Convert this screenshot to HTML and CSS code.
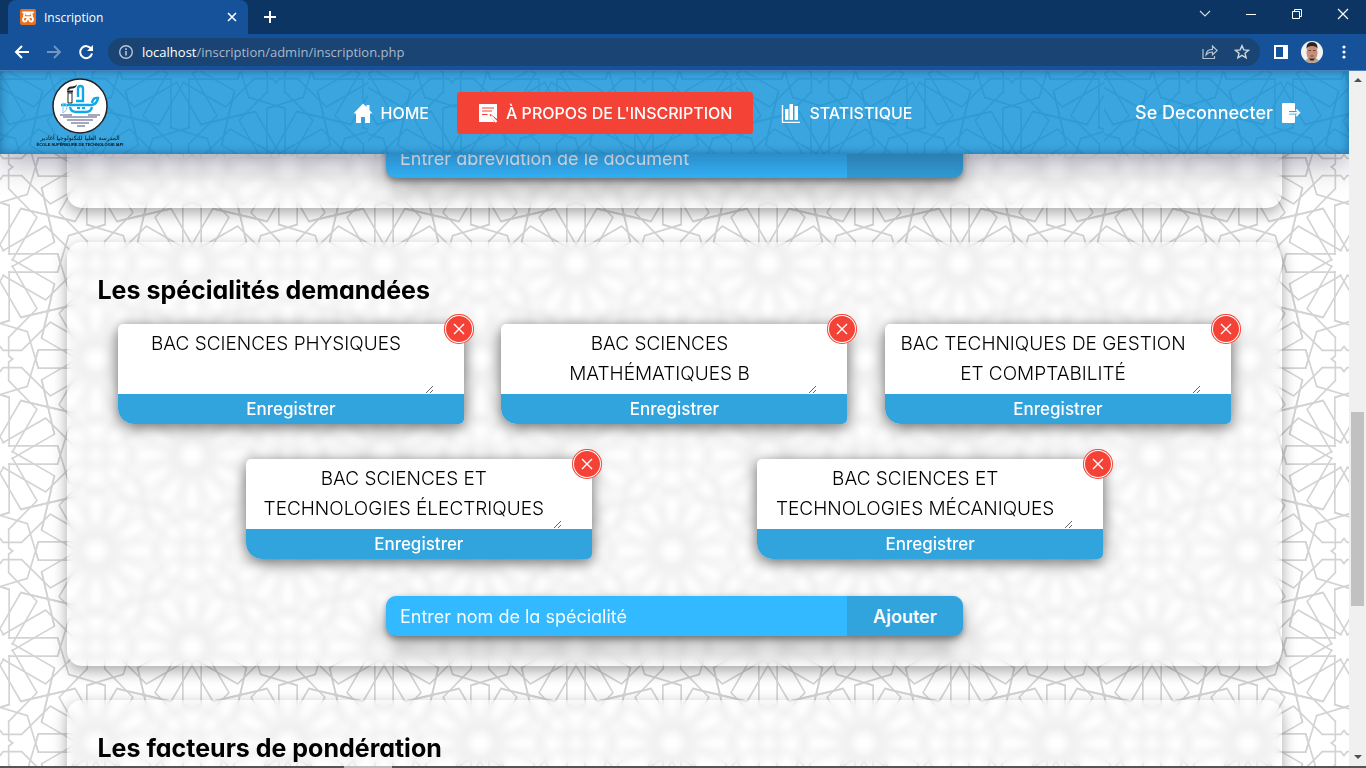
FILE: index.html
```html
<!DOCTYPE html>
<html lang="fr">
<head>
<meta charset="utf-8">
<title>Inscription</title>
<link rel="stylesheet" href="styles.css">
</head>
<body>
<div class="browser">
  <div class="tabbar">
    <div class="tab">
      <svg class="favicon" viewBox="0 0 16 16" width="16" height="16" aria-hidden="true"><rect width="16" height="16" rx="2" fill="#e8711f"/><g fill="none" stroke="#fff" stroke-width="1.800" stroke-linecap="round" stroke-linejoin="round"><path d="M3 3.500h10M4.500 5.200Q3 8 5 8.200M11.500 5.200Q13 8 11 8.200M5 8.200h6M5 8.200Q3 8.500 3 10.500t1.800 2 2-1.700L8 8.200l1.200 2.600q.3 1.700 2 1.700t1.800-2-2-2.300M6.500 5.300h3"/></g></svg>
      <span class="tab-title">Inscription</span>
      <button class="chrome-btn tab-close" aria-label="Fermer l'onglet"><svg viewBox="0 0 10 10" width="10" height="10"><path d="M1 1l8 8M9 1l-8 8" stroke="#fff" stroke-width="1.600"/></svg></button>
    </div>
    <button class="chrome-btn new-tab" aria-label="Nouvel onglet"><svg viewBox="0 0 12 12" width="12" height="12"><path d="M6 0v12M0 6h12" stroke="#fff" stroke-width="2"/></svg></button>
    <div class="window-buttons">
      <button class="chrome-btn" aria-label="Onglets"><svg viewBox="0 0 12 12" width="12" height="12"><path d="M1 3l5 5 5-5" fill="none" stroke="#cfd9e4" stroke-width="1.200"/></svg></button>
      <button class="chrome-btn" aria-label="Réduire"><svg viewBox="0 0 12 12" width="12" height="12"><path d="M1 6.500h10" stroke="#fff"/></svg></button>
      <button class="chrome-btn" aria-label="Restaurer"><svg viewBox="0 0 12 12" width="12" height="12"><path d="M1.500 3.500h7v7h-7zM3.500 3.500v-2h7v7h-2" fill="none" stroke="#fff"/></svg></button>
      <button class="chrome-btn" aria-label="Fermer"><svg viewBox="0 0 12 12" width="12" height="12"><path d="M1 1l10 10M11 1L1 11" stroke="#fff" stroke-width="1.200"/></svg></button>
    </div>
  </div>
  <div class="toolbar">
    <button class="chrome-btn" aria-label="Retour"><svg viewBox="0 0 16 16" width="16" height="16"><path d="M15 8H2M8 2L2 8l6 6" fill="none" stroke="#fff" stroke-width="2"/></svg></button>
    <button class="chrome-btn" aria-label="Avancer"><svg viewBox="0 0 16 16" width="16" height="16"><path d="M1 8h13M8 2l6 6-6 6" fill="none" stroke="#7396c1" stroke-width="1.800"/></svg></button>
    <button class="chrome-btn" aria-label="Actualiser"><svg viewBox="0 0 16 16" width="16" height="16"><path d="M13.300 5A6 6 0 1 0 14 9.500" fill="none" stroke="#fff" stroke-width="2"/><path d="M15 1v6H9z" fill="#fff"/></svg></button>
    <div class="omnibox">
      <svg viewBox="0 0 16 16" width="16" height="16" aria-hidden="true"><circle cx="8" cy="8" r="6.300" fill="none" stroke="#b9c6d5" stroke-width="1.400"/><path d="M8 7v4.500M8 4.300v1.700" stroke="#b9c6d5" stroke-width="1.600"/></svg>
      <div class="url"><span class="host">localhost</span>/inscription/admin/inscription.php</div>
      <button class="chrome-btn" aria-label="Partager"><svg viewBox="0 0 16 16" width="16" height="16"><path d="M1 5v9.500h11.500V12M4 11c.4-4 3-5.600 6.500-5.600V2l4.700 4.500-4.700 4.300V8C7.500 8 5.500 9 4 11z" fill="none" stroke="#b4c1d0" stroke-width="1.200"/></svg></button>
      <button class="chrome-btn" aria-label="Favori"><svg viewBox="0 0 16 16" width="16" height="16"><path d="M8 1.700l1.800 4.200 4.700.4-3.500 3 1.100 4.500L8 11.400l-4.100 2.400L5 9.300l-3.500-3 4.700-.4z" fill="none" stroke="#d0d8e2" stroke-width="1.400"/></svg></button>
    </div>
    <button class="chrome-btn" aria-label="Panneau latéral"><svg viewBox="0 0 14 14" width="14" height="14"><path d="M0 0h14v14H0zM2 2v10h7V2z" fill="#fff" fill-rule="evenodd"/></svg></button>
    <button class="chrome-btn profile" aria-label="Profil"><svg viewBox="0 0 22 22" width="22" height="22"><defs><clipPath id="face"><circle cx="11" cy="11" r="11"/></clipPath></defs><g clip-path="url(#face)"><rect width="22" height="22" fill="#f3f2f1"/><path d="M3 22q1-4 5-5h6q4 1 5 5z" fill="#b9a391"/><ellipse cx="11" cy="11.500" rx="5.500" ry="8.500" fill="#c58e78"/><path d="M5.500 8Q5 1 11 1t5.500 7q-1-3-5.500-3T5.500 8z" fill="#2b2322"/><path d="M8 17.500h6l-1.500 2h-3z" fill="#3a2925"/><path d="M7.500 9.500h2.500M12 9.500h2.500M9.500 15h3" stroke="#6b4336"/></g></svg></button>
    <button class="chrome-btn" aria-label="Menu"><svg viewBox="0 0 4 14" width="4" height="14"><g fill="#fff"><circle cx="2" cy="2" r="1.600"/><circle cx="2" cy="7" r="1.600"/><circle cx="2" cy="12" r="1.600"/></g></svg></button>
  </div>

  <div class="viewport">
    <div class="page">
      <svg class="backdrop" width="100%" height="100%" aria-hidden="true">
        <defs>
          <g id="petal">
            <path d="M26 27.500H173L181 0 173-27.500H26"/>
          </g>
          <g id="links">
            <path d="M163 63L125 225M63 163L225 125M110 138L26 223M138 110L223 26M173-27.500L206 82M173 27.500L206-82"/>
          </g>
          <g id="rosette">
            <use href="#petal"/><use href="#petal" transform="rotate(90)"/><use href="#petal" transform="rotate(180)"/><use href="#petal" transform="rotate(270)"/>
            <g id="slant"><path id="bar" d="M26 27.500H173M26-27.500H173" transform="rotate(30)"/><use href="#bar" transform="rotate(30)"/></g>
            <use href="#slant" transform="rotate(90)"/><use href="#slant" transform="rotate(180)"/><use href="#slant" transform="rotate(270)"/>
            <use href="#links"/><use href="#links" transform="rotate(90)"/><use href="#links" transform="rotate(180)"/><use href="#links" transform="rotate(270)"/>
          </g>
          <g id="cross">
            <path id="notch" d="M26-65V-9L38 0 26 9V65"/>
            <use href="#notch" transform="rotate(90)"/><use href="#notch" transform="rotate(180)"/><use href="#notch" transform="rotate(270)"/>
          </g>
          <g id="cell">
            <use href="#rosette"/><use href="#rosette" x="576"/><use href="#rosette" y="576"/><use href="#rosette" x="576" y="576"/><use href="#rosette" x="288" y="288"/>
            <use href="#cross" y="288"/><use href="#cross" x="576" y="288"/><use href="#cross" x="288"/><use href="#cross" x="288" y="576"/>
          </g>
          <pattern id="zellige" width="192" height="192" patternUnits="userSpaceOnUse">
            <use href="#cell" transform="scale(.33333)" fill="none" stroke="#d3d3d3" stroke-width="5" stroke-linecap="round"/>
          </pattern>
          <pattern id="zellige-header" width="192" height="192" patternUnits="userSpaceOnUse" patternTransform="translate(-12 -1)">
            <use href="#cell" transform="scale(.33333)" fill="none" stroke="#2f9ad4" stroke-width="5" stroke-linecap="round"/>
          </pattern>
          <pattern id="header-tile" width="368" height="192" patternUnits="userSpaceOnUse"><rect width="368" height="192" fill="url(#zellige-header)"/></pattern>
        </defs>
        <rect width="100%" height="100%" fill="url(#zellige)"/>
      </svg>

      <header class="header">
        <svg class="backdrop" width="100%" height="100%" aria-hidden="true"><rect width="100%" height="100%" fill="url(#header-tile)"/></svg>
        <a class="logo" href="#">
          <svg viewBox="0 0 56 56" width="56" height="56" aria-hidden="true">
            <circle cx="28" cy="28" r="27" fill="#fff" stroke="#222" stroke-width="1.500"/>
            <path d="M16 15h4v10h-4z" fill="#fff" stroke="#222"/><path d="M15 13.500h6" stroke="#222" stroke-width="2"/><path d="M15 12q1-4 5-3.500 3 0 5-2-1 4-5 4-3 0-3 2" fill="#222"/>
            <g fill="none" stroke="#10a9e6" stroke-width="2.400"><path d="M24 23h7V11q0-3-2.500-3T26 11v8"/><path d="M9 27h31q5-1 6-7-5-1-6 5"/><path d="M18 29q1 5 6 5h10q5 0 6-5"/></g>
            <path d="M11 25q4 0 4 4t-4 6z" fill="none" stroke="#7ccbee"/><path d="M25 30h3M30 30h3" stroke="#10a9e6" stroke-width="2"/>
            <g stroke="#a3a8bf" stroke-width="2"><path d="M8 37h12M36 37h12M11 39h34M15 42h26M19 45h18M25 48h8"/></g>
          </svg>
          <span class="logo-ar" lang="ar">المدرسة العليا للتكنولوجيا أغادير</span>
          <span class="logo-fr">ÉCOLE SUPÉRIEURE DE TECHNOLOGIE IAPI</span>
        </a>
        <nav class="nav">
          <a class="nav-link" href="#"><svg viewBox="0 0 20 20" width="20" height="20" aria-hidden="true"><path d="M10 .5L.5 10.500H3V20h5v-6h4v6h5v-9.500h2.500L16.500 7V2h-3v2z" fill="#fff"/></svg>HOME</a>
          <a class="nav-link active" href="#"><svg viewBox="0 0 20 20" width="20" height="20" aria-hidden="true"><path d="M1.500 1h17q.5 0 .5.500V16l-6.500-5-1 1 5 7H1.500Q1 19 1 18.500v-17Q1 1 1.500 1z" fill="#fff"/><path d="M4 5h12M4 8h10M4 11.500h5.500" stroke="#f44336" stroke-width="1.200"/><path d="M13 13l5.500 6" stroke="#fff" stroke-width="2.200"/></svg>À PROPOS DE L'INSCRIPTION</a>
          <a class="nav-link" href="#"><svg viewBox="0 0 20 20" width="20" height="20" aria-hidden="true"><path d="M1.500 2v17.500H19" fill="none" stroke="#fff" stroke-width="1.400"/><path d="M4 6h3.500v11H4zM8.500 1H12v16H8.500zM13.500 3H17v14h-3.500z" fill="#fff"/></svg>STATISTIQUE</a>
        </nav>
        <a class="logout" href="#">Se Deconnecter<svg viewBox="0 0 20 20" width="20" height="20" aria-hidden="true"><path d="M2 0h11q1 0 1 1v7H8v3.500h6V19q0 1-1 1H2q-1 0-1-1V1q0-1 1-1z" fill="#fff"/><path d="M8 9.800h10M15 6.500l3.300 3.300L15 13" fill="none" stroke="#e9f6fd" stroke-width="1.800"/></svg></a>
      </header>

      <main class="content">
        <section class="card card-partial">
          <form class="add-form"><input type="text" aria-label="Abréviation du document" placeholder="Entrer abréviation de le document"><button type="button" aria-label="Ajouter le document"></button></form>
        </section>
        <section class="card">
          <h2>Les spécialités demandées</h2>
          <ul class="items">
            <li class="item"><textarea aria-label="Spécialité 1">BAC SCIENCES PHYSIQUES</textarea><button class="save" type="button">Enregistrer</button><button class="remove" type="button" aria-label="Supprimer"><svg viewBox="0 0 12 12" width="12" height="12"><path d="M1 1l10 10M11 1L1 11" stroke="#fff" stroke-width="1.400"/></svg></button></li>
            <li class="item"><textarea aria-label="Spécialité 2">BAC SCIENCES MATHÉMATIQUES B</textarea><button class="save" type="button">Enregistrer</button><button class="remove" type="button" aria-label="Supprimer"><svg viewBox="0 0 12 12" width="12" height="12"><path d="M1 1l10 10M11 1L1 11" stroke="#fff" stroke-width="1.400"/></svg></button></li>
            <li class="item"><textarea aria-label="Spécialité 3">BAC TECHNIQUES DE GESTION ET COMPTABILITÉ</textarea><button class="save" type="button">Enregistrer</button><button class="remove" type="button" aria-label="Supprimer"><svg viewBox="0 0 12 12" width="12" height="12"><path d="M1 1l10 10M11 1L1 11" stroke="#fff" stroke-width="1.400"/></svg></button></li>
            <li class="item"><textarea aria-label="Spécialité 4">BAC SCIENCES ET TECHNOLOGIES ÉLECTRIQUES</textarea><button class="save" type="button">Enregistrer</button><button class="remove" type="button" aria-label="Supprimer"><svg viewBox="0 0 12 12" width="12" height="12"><path d="M1 1l10 10M11 1L1 11" stroke="#fff" stroke-width="1.400"/></svg></button></li>
            <li class="item"><textarea aria-label="Spécialité 5">BAC SCIENCES ET TECHNOLOGIES MÉCANIQUES</textarea><button class="save" type="button">Enregistrer</button><button class="remove" type="button" aria-label="Supprimer"><svg viewBox="0 0 12 12" width="12" height="12"><path d="M1 1l10 10M11 1L1 11" stroke="#fff" stroke-width="1.400"/></svg></button></li>
          </ul>
          <form class="add-form"><input type="text" aria-label="Nom de la spécialité" placeholder="Entrer nom de la spécialité"><button type="button">Ajouter</button></form>
        </section>
        <section class="card">
          <h2>Les facteurs de pondération</h2>
        </section>
      </main>
    </div>
    <div class="scrollbar" aria-hidden="true">
      <svg viewBox="0 0 8 4" width="8" height="4"><path d="M0 4l4-4 4 4z" fill="#505050"/></svg>
      <div class="track"><div class="thumb"></div></div>
      <svg viewBox="0 0 8 4" width="8" height="4"><path d="M0 0l4 4 4-4z" fill="#505050"/></svg>
    </div>
  </div>
  <div class="taskbar"><span></span></div>
</div>
</body>
</html>
```

FILE: styles.css
```css
* { box-sizing: border-box; }

body {
  margin: 0;
  font-family: Inter, "Open Sans", sans-serif;
  font-feature-settings: "cv11";
  background: #fff;
}

button, input, textarea {
  font: inherit;
  font-feature-settings: inherit;
  border: 0;
  margin: 0;
}

a { color: inherit; text-decoration: none; }

.browser {
  display: flex;
  flex-direction: column;
  height: 100vh;
  overflow: hidden;
}

/* Browser window */
.chrome-btn {
  display: grid;
  place-items: center;
  padding: 0;
  background: none;
}

.tabbar {
  display: flex;
  flex: none;
  height: 34px;
  padding-left: 8px;
  background: #0c3563;
  font-family: "Open Sans", sans-serif;
  font-size: 12px;
  color: #fff;
}

.tab {
  display: flex;
  align-items: center;
  gap: 8px;
  width: 240px;
  padding: 0 10px 0 12px;
  border-radius: 8px 8px 0 0;
  background: #155299;
}

.tab-title { flex: 1; }
.tab-close { width: 12px; }
.new-tab { width: 44px; }

.window-buttons {
  display: flex;
  margin-left: auto;
  padding-bottom: 6px;
}

.window-buttons .chrome-btn { width: 46px; }

.toolbar {
  display: flex;
  flex: none;
  align-items: center;
  gap: 16px;
  height: 37px;
  padding: 0 20px 0 14px;
  border-bottom: 1px solid #4d80b8;
  background: #155299;
}

.omnibox {
  display: flex;
  flex: 1;
  align-items: center;
  gap: 16px;
  height: 28px;
  margin-left: -2px;
  margin-right: -2px;
  padding: 0 10px;
  border-radius: 14px;
  background: #1a4473;
  font-family: "Open Sans", sans-serif;
  font-size: 13px;
  color: #a9b8ca;
}

.url { flex: 1; margin-left: -8px; }
.host { color: #fff; }
.profile { margin: 0 3px 0 -3px; }

.taskbar {
  flex: none;
  height: 2px;
  background: #555;
}

.taskbar span {
  display: block;
  width: 48px;
  height: 2px;
  margin-left: 344px;
  background: #bbb;
}

/* Page */
.viewport {
  display: flex;
  flex: 1;
  min-height: 0;
}

.page {
  position: relative;
  display: flex;
  flex: 1;
  flex-direction: column;
  min-width: 0;
  overflow: hidden;
}

.backdrop {
  position: absolute;
  inset: 0;
}

.header {
  position: relative;
  z-index: 2;
  display: flex;
  flex: none;
  align-items: center;
  justify-content: space-between;
  height: 83px;
  padding: 0 48px 0 42px;
  background: #3aa5df;
  box-shadow: 0 8px 32px rgba(31, 28, 60, .4);
  color: #fff;
  font-weight: 500;
}

.header::after {
  content: "";
  position: absolute;
  inset: 0;
  box-shadow: inset 0 0 10px rgba(0, 40, 80, .45);
  pointer-events: none;
}

.header > a, .nav { position: relative; }

.logo {
  display: flex;
  flex-direction: column;
  align-items: center;
  width: 76px;
  color: #111;
  white-space: nowrap;
}

.logo-ar { font: 6px/8px "DejaVu Sans", sans-serif; }
.logo-fr { font: bold 4px/6px "Liberation Sans", sans-serif; }

.nav {
  display: flex;
  gap: 7px;
  margin-left: 12px;
}

.nav-link {
  display: flex;
  align-items: center;
  gap: 8px;
  height: 42px;
  padding: 0 21px;
  border-radius: 3px;
  font-size: 16px;
}

.nav-link.active { background: #f44336; }

.logout {
  display: flex;
  align-items: center;
  gap: 8px;
  font-size: 18px;
}

.content {
  position: relative;
  flex: 1;
  min-height: 0;
  overflow: hidden;
}

.card {
  width: 90%;
  margin: 0 auto 34px;
  padding: 30px 13px;
  border-radius: 15px;
  background: rgba(255, 255, 255, .1);
  box-shadow: 0 5px 15px rgba(0, 0, 0, .35);
  backdrop-filter: blur(4px);
}

.card-partial {
  margin-top: -26px;
  padding-top: 10px;
}

h2 {
  margin: 0 0 16px;
  padding-left: 17px;
  font-size: 25px;
  line-height: 36px;
  font-weight: 700;
}

.items {
  display: flex;
  flex-wrap: wrap;
  justify-content: space-evenly;
  row-gap: 35px;
  margin: 0 0 37px;
  padding: 0;
  list-style: none;
}

.item {
  position: relative;
  width: 346px;
  border-radius: 5px 5px 5px 16px;
  background: #fff;
  box-shadow: 0 3px 15px rgba(0, 0, 0, .6);
}

.item textarea {
  display: block;
  width: 316px;
  height: 70px;
  padding: 5px 10px;
  background: none;
  overflow: hidden;
  color: #000;
  font-size: 19px;
  font-weight: 300;
  line-height: 30px;
  text-align: center;
}

.save {
  display: block;
  width: 100%;
  height: 30px;
  border-radius: 0 0 5px 16px;
  background: #31a3dd;
  color: #fff;
  font-size: 17px;
  font-weight: 500;
}

.remove {
  position: absolute;
  top: -10px;
  right: -10px;
  display: grid;
  place-items: center;
  width: 30px;
  height: 30px;
  padding: 0;
  border-radius: 50%;
  background: #f44336;
  box-shadow: inset 0 0 0 1px #f44336, inset 0 0 0 2px #fff;
}

.add-form {
  display: flex;
  width: 577px;
  height: 40px;
  margin: 0 auto;
  border-radius: 10px;
  overflow: hidden;
  background: #33b9ff;
  box-shadow: 0 3px 6px rgba(0, 0, 0, .4), 0 14px 24px rgba(0, 0, 0, .25);
}

.add-form input {
  flex: 1;
  min-width: 0;
  padding: 0 14px;
  background: none;
  font-size: 18px;
}

.add-form input::placeholder { color: #fff; opacity: .95; }

.add-form button {
  width: 116px;
  background: #31a3dd;
  color: #fff;
  font-size: 18px;
  font-weight: 600;
}

.scrollbar {
  display: flex;
  flex: none;
  flex-direction: column;
  align-items: center;
  width: 17px;
  padding: 7px 0;
  background: #f0f0f0;
}

.track {
  display: flex;
  flex: 1;
  flex-direction: column;
  padding-top: 330px;
}

.thumb {
  width: 13px;
  height: 194px;
  background: #c1c1c1;
}
```
